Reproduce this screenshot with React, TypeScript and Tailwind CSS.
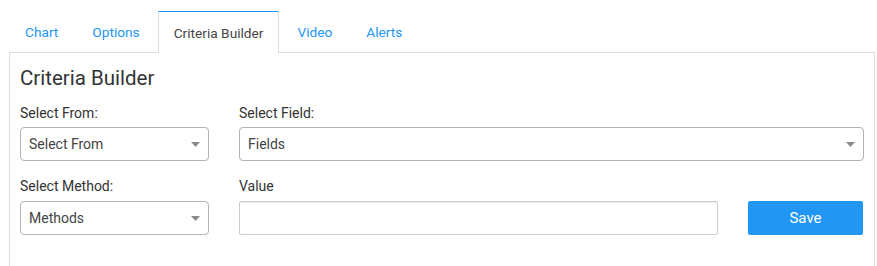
import React from "react";

const font = { fontFamily: "Roboto, 'Helvetica Neue', Arial, sans-serif" };

function Arrow() {
  return (
    <svg width="9" height="5" viewBox="0 0 9 5" className="shrink-0">
      <path d="M0 0 L9 0 L4.5 5 Z" fill="#8a8a8a" />
    </svg>
  );
}

function Select({ text, className }: { text: string; className?: string }) {
  return (
    <div
      className={
        "h-[34px] border border-[#b3b3b3] rounded-[4px] bg-white flex items-center justify-between pl-[8px] pr-[8px] pt-[1px] text-[14px] text-[#444] " +
        (className ?? "")
      }
    >
      <span>{text}</span>
      <Arrow />
    </div>
  );
}

export default function App() {
  const tabs = ["Chart", "Options", "Criteria Builder", "Video", "Alerts"];
  return (
    <div className="w-[877px] h-[266px] bg-white overflow-hidden pt-[11px]" style={font}>
      <div className="flex pl-[9px]">
        {tabs.map((t) => {
          const active = t === "Criteria Builder";
          return (
            <div
              key={t}
              className={
                "mr-[2px] px-[15px] pt-[2px] flex items-center text-[13.7px] " +
                (active
                  ? "border-t border-l border-r border-t-[#2196f3] border-l-[#ddd] border-r-[#ddd] text-[#444] bg-white relative -mb-px h-[42px] pb-[1px]"
                  : "h-[41px] border border-transparent text-[#2196f3]")
              }
            >
              {t}
            </div>
          );
        })}
      </div>
      <div className="ml-[9px] w-[866px] h-[300px] border border-[#ddd] px-[10px] pt-[11px]">
        <div className="text-[20.5px] leading-[28px] text-[#333] mb-[11px]">Criteria Builder</div>
        <div className="flex gap-[30px]">
          <div className="w-[189px]">
            <div className="text-[14px] leading-[20px] text-[#333] mb-[4px]">Select From:</div>
            <Select text="Select From" />
          </div>
          <div className="w-[625px]">
            <div className="text-[14px] leading-[20px] text-[#333] mb-[4px]">Select Field:</div>
            <Select text="Fields" />
          </div>
        </div>
        <div className="flex gap-[30px] mt-[15px]">
          <div className="w-[189px]">
            <div className="text-[14px] leading-[20px] text-[#333] mb-[5px]">Select Method:</div>
            <Select text="Methods" />
          </div>
          <div className="w-[479px]">
            <div className="text-[14px] leading-[20px] text-[#333] mb-[5px]">Value</div>
            <div className="h-[34px] border border-[#ccc] rounded-[2px] bg-white shadow-[inset_0_1px_1px_rgba(0,0,0,0.075)]" />
          </div>
          <div className="w-[115px] pt-[25px]">
            <button className="w-full h-[34px] bg-[#2196f3] text-white text-[15px] rounded-[2px]">Save</button>
          </div>
        </div>
      </div>
    </div>
  );
}
